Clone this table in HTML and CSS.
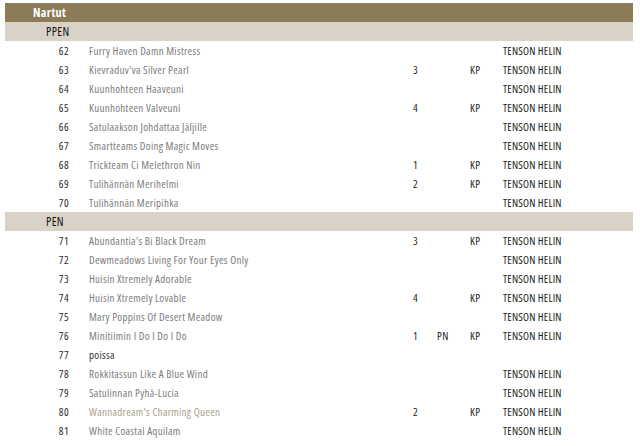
FILE: index.html
```html
<!DOCTYPE html>
<html>
<head>
<meta charset="utf-8">
<link rel="stylesheet" href="styles.css">
</head>
<body>
<table class="results">
<colgroup>
<col class="c-num"><col class="c-name"><col class="c-pl"><col class="c-pn"><col class="c-kp"><col class="c-judge">
</colgroup>
<tbody>
<tr class="sex"><td colspan="6">Nartut</td></tr>
<tr class="cls"><td colspan="6">PPEN</td></tr>
<tr><td class="num">62</td><td class="name">Furry Haven Damn Mistress</td><td></td><td></td><td></td><td class="judge">TENSON HELIN</td></tr>
<tr><td class="num">63</td><td class="name">Kievraduv'va Silver Pearl</td><td>3</td><td></td><td>KP</td><td class="judge">TENSON HELIN</td></tr>
<tr><td class="num">64</td><td class="name">Kuunhohteen Haaveuni</td><td></td><td></td><td></td><td class="judge">TENSON HELIN</td></tr>
<tr><td class="num">65</td><td class="name">Kuunhohteen Valveuni</td><td>4</td><td></td><td>KP</td><td class="judge">TENSON HELIN</td></tr>
<tr><td class="num">66</td><td class="name">Satulaakson Johdattaa Jäljille</td><td></td><td></td><td></td><td class="judge">TENSON HELIN</td></tr>
<tr><td class="num">67</td><td class="name">Smartteams Doing Magic Moves</td><td></td><td></td><td></td><td class="judge">TENSON HELIN</td></tr>
<tr><td class="num">68</td><td class="name">Trickteam Ci Melethron Nin</td><td>1</td><td></td><td>KP</td><td class="judge">TENSON HELIN</td></tr>
<tr><td class="num">69</td><td class="name">Tulihännän Merihelmi</td><td>2</td><td></td><td>KP</td><td class="judge">TENSON HELIN</td></tr>
<tr><td class="num">70</td><td class="name">Tulihännän Meripihka</td><td></td><td></td><td></td><td class="judge">TENSON HELIN</td></tr>
<tr class="cls"><td colspan="6">PEN</td></tr>
<tr><td class="num">71</td><td class="name">Abundantia's Bi Black Dream</td><td>3</td><td></td><td>KP</td><td class="judge">TENSON HELIN</td></tr>
<tr><td class="num">72</td><td class="name">Dewmeadows Living For Your Eyes Only</td><td></td><td></td><td></td><td class="judge">TENSON HELIN</td></tr>
<tr><td class="num">73</td><td class="name">Huisin Xtremely Adorable</td><td></td><td></td><td></td><td class="judge">TENSON HELIN</td></tr>
<tr><td class="num">74</td><td class="name">Huisin Xtremely Lovable</td><td>4</td><td></td><td>KP</td><td class="judge">TENSON HELIN</td></tr>
<tr><td class="num">75</td><td class="name">Mary Poppins Of Desert Meadow</td><td></td><td></td><td></td><td class="judge">TENSON HELIN</td></tr>
<tr><td class="num">76</td><td class="name">Minitiimin I Do I Do I Do</td><td>1</td><td>PN</td><td>KP</td><td class="judge">TENSON HELIN</td></tr>
<tr><td class="num">77</td><td class="name absent">poissa</td><td></td><td></td><td></td><td></td></tr>
<tr><td class="num">78</td><td class="name">Rokkitassun Like A Blue Wind</td><td></td><td></td><td></td><td class="judge">TENSON HELIN</td></tr>
<tr><td class="num">79</td><td class="name">Satulinnan Pyhä-Lucia</td><td></td><td></td><td></td><td class="judge">TENSON HELIN</td></tr>
<tr><td class="num">80</td><td class="name light">Wannadream's Charming Queen</td><td>2</td><td></td><td>KP</td><td class="judge">TENSON HELIN</td></tr>
<tr><td class="num">81</td><td class="name">White Coastal Aquilam</td><td></td><td></td><td></td><td class="judge">TENSON HELIN</td></tr>
</tbody>
</table>
</body>
</html>
```
FILE: styles.css
```css
html, body {
  margin: 0;
  padding: 0;
  background: #ffffff;
}
body {
  padding: 3px 7px 0 5px;
  font-family: "Open Sans", "DejaVu Sans Condensed", sans-serif;
  font-stretch: 75%;
  font-size: 11px;
  letter-spacing: 0.4px;
  color: #222;
}
.results {
  width: 628px;
  border-collapse: collapse;
  table-layout: fixed;
}
.c-num { width: 72px; }
.c-name { width: 328px; }
.c-pl { width: 24px; }
.c-pn { width: 33px; }
.c-kp { width: 33px; }
.c-judge { width: auto; }
.results td {
  height: 18px;
  padding: 1px 0 0 8px;
  line-height: 18px;
  white-space: nowrap;
  overflow: hidden;
  vertical-align: middle;
  font-weight: 500;
  color: #222;
}
.results td.num {
  text-align: right;
  padding-right: 8px;
  padding-left: 0;
  font-weight: 500;
  color: #2a2a2a;
}
.results td.name {
  padding-left: 12px;
  font-weight: 400;
  color: #7c7c7c;
  letter-spacing: 0.3px;
}
.results td.name.absent { color: #333; }
.results td.name.light { color: #a89f8a; }
.results td.judge { font-weight: 500; color: #1a1a1a; letter-spacing: 0.2px; }
.results .sex td {
  background: #8c7b57;
  color: #fff;
  font-weight: 700;
  font-size: 12px;
  padding-left: 28px;
}
.results .cls td {
  background: #d8d3c6;
  color: #111;
  font-weight: 500;
  font-size: 12px;
  padding-left: 41px;
}
```
